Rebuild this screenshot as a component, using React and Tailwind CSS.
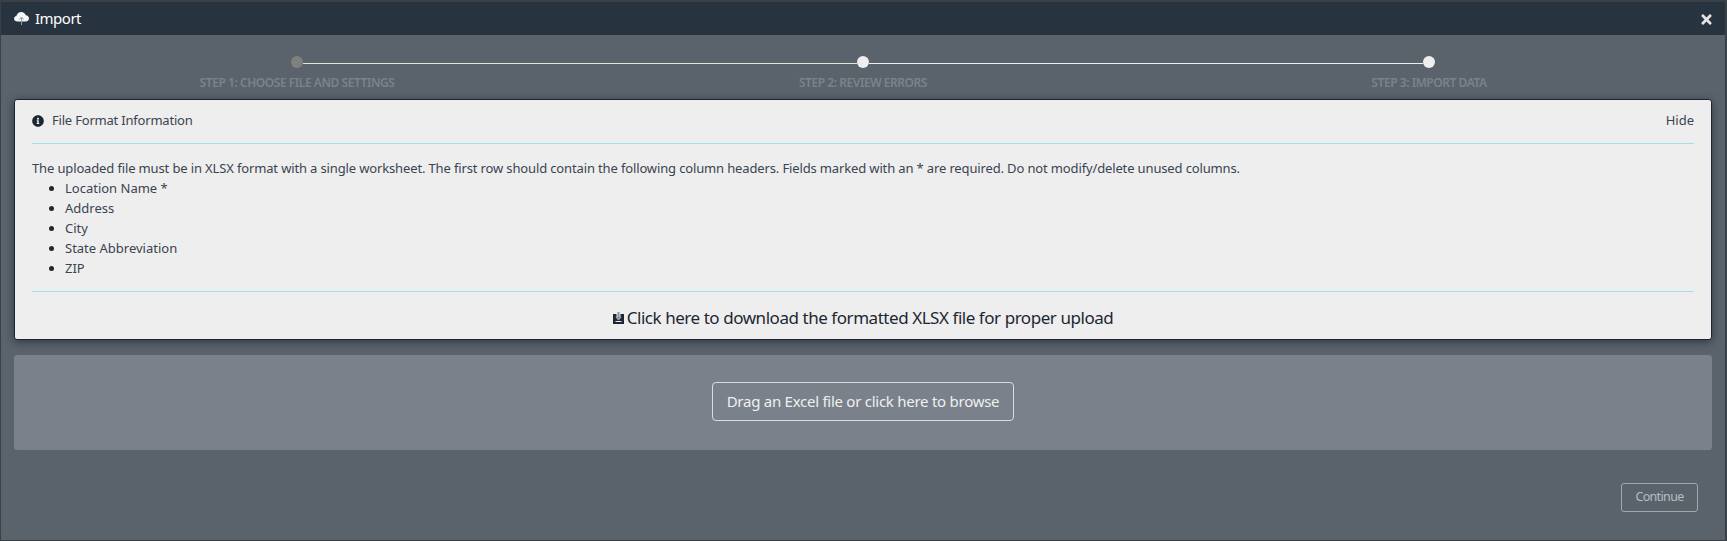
import React from 'react'
import { FaInfoCircle, FaTimes } from 'react-icons/fa'

const columns = ['Location Name *', 'Address', 'City', 'State Abbreviation', 'ZIP']
const steps = ['STEP 1: CHOOSE FILE AND SETTINGS', 'STEP 2: REVIEW ERRORS', 'STEP 3: IMPORT DATA']

// cloud with a thin arrow going up through it
const CloudIcon = () => (
  <svg className="h-[13px] w-[15px] shrink-0" viewBox="0 0 15 13">
    <path d="M3.500 9.500C1.500 9.500 0 8.300 0 6.700c0-1.400 1-2.500 2.400-2.700C2.800 1.700 4.800 0 7.200 0c2.200 0 4 1.300 4.600 3.200 1.800.1 3.200 1.600 3.200 3.300 0 1.700-1.500 3-3.400 3z" fill="#f6f6f6" />
    <path d="M7.500 13V5.500M5.500 7.500l2-2.500 2 2.500" fill="none" stroke="#8fa0a8" strokeWidth="1" />
  </svg>
)

// box with a down arrow, same as the small glyph next to the download link
const DownloadIcon = () => (
  <svg className="mr-[3px] h-[12px] w-[11px] shrink-0" viewBox="0 0 11 12">
    <path d="M0 2h3.500v3H2.500L5.500 8.500 8.500 5h-1V2H11v10H0z" fill="#1d2733" />
    <path d="M4.500 0h2v5h1.500L5.500 8 3 5h1.500z" fill="#8a9098" />
    <path d="M2.500 9h6v1h-6z" fill="#eeeeee" />
  </svg>
)

const App = () => {
  return (
    <div className="h-[541px] w-[1727px] overflow-hidden bg-[#3b4046] pt-[2px] pr-[2px] pl-[1px] font-['Noto_Sans',sans-serif]">
      <div className="flex h-[538px] flex-col rounded-t-[3px] bg-[#5a626c]">
        <div className="flex h-[33px] shrink-0 items-center justify-between bg-[#283340] pr-[11px] pl-[13px] text-white">
          <div className="flex items-center">
            <CloudIcon />
            <span className="ml-[6px] text-[15px] tracking-[-0.5px]">Import</span>
          </div>
          <FaTimes className="mt-[2px] h-[15px] w-[15px] text-[#e4e4e4]" />
        </div>

        <div className="mt-[21px] flex items-center pr-[290px] pl-[290px]">
          <div className="h-[12px] w-[12px] shrink-0 rounded-full bg-[#808080]" />
          <div className="mt-[2px] h-px flex-1 bg-[#e0e8d4]" />
          <div className="h-[12px] w-[12px] shrink-0 rounded-full bg-[#eeeeee]" />
          <div className="mt-[2px] h-px flex-1 bg-[#eeeeee]" />
          <div className="h-[12px] w-[12px] shrink-0 rounded-full bg-[#eeeeee]" />
        </div>

        <div className="mt-[5px] grid h-[19px] grid-cols-[566px_566px_566px] pl-[13px] text-center text-[12px] leading-[19px] font-semibold tracking-[-0.45px] text-[#7c8289]">
          {steps.map((step) => (
            <div key={step}>{step}</div>
          ))}
        </div>

        <div className="mt-[7px] mr-[13px] ml-[13px] h-[241px] shrink-0 rounded-[3px] border border-[#1c2530] bg-[#eeeeee] px-[17px] text-[#3a4450] shadow-[0_2px_8px_rgba(20,28,38,0.6)]">
          <div className="flex h-[44px] items-center justify-between border-b border-[#9fe2e4] pb-[2px] text-[13px]">
            <div className="flex items-center">
              <FaInfoCircle className="h-[12px] w-[12px] text-[#1d2733]" />
              <span className="ml-[8px] tracking-[-0.2px]">File Format Information</span>
            </div>
            <span>Hide</span>
          </div>
          <p className="mt-[14px] text-[13px] leading-[20px] tracking-[-0.14px]">
            The uploaded file must be in XLSX format with a single worksheet. The first row should contain the following column headers. Fields marked with an * are required. Do not modify/delete unused columns.
          </p>
          <ul className="list-disc pl-[33px] text-[13px] leading-[20px] marker:text-[#1d2733]">
            {columns.map((col) => (
              <li key={col}>{col}</li>
            ))}
          </ul>
          <div className="mt-[13px] flex h-[49px] items-center justify-center border-t border-[#9fe2e4] pt-[3px] text-[17px] tracking-[-0.45px] text-[#1d2733]">
            <DownloadIcon />
            <span>Click here to download the formatted XLSX file for proper upload</span>
          </div>
        </div>

        <div className="mt-[15px] mr-[13px] ml-[13px] flex h-[95px] shrink-0 items-center justify-center rounded-[3px] bg-[#7a818a] pb-[3px]">
          <button className="h-[39px] w-[302px] rounded-[4px] border border-[#dcdcdc] text-[15px] tracking-[-0.26px] text-[#f0f0f0]">
            Drag an Excel file or click here to browse
          </button>
        </div>

        <div className="mt-[33px] flex justify-end pr-[27px]">
          <button className="h-[29px] w-[77px] rounded-[3px] border border-[#a3a8ae] text-[12.5px] tracking-[-0.65px] text-[#b8bcc0]">
            Continue
          </button>
        </div>
      </div>
    </div>
  )
}

export default App
